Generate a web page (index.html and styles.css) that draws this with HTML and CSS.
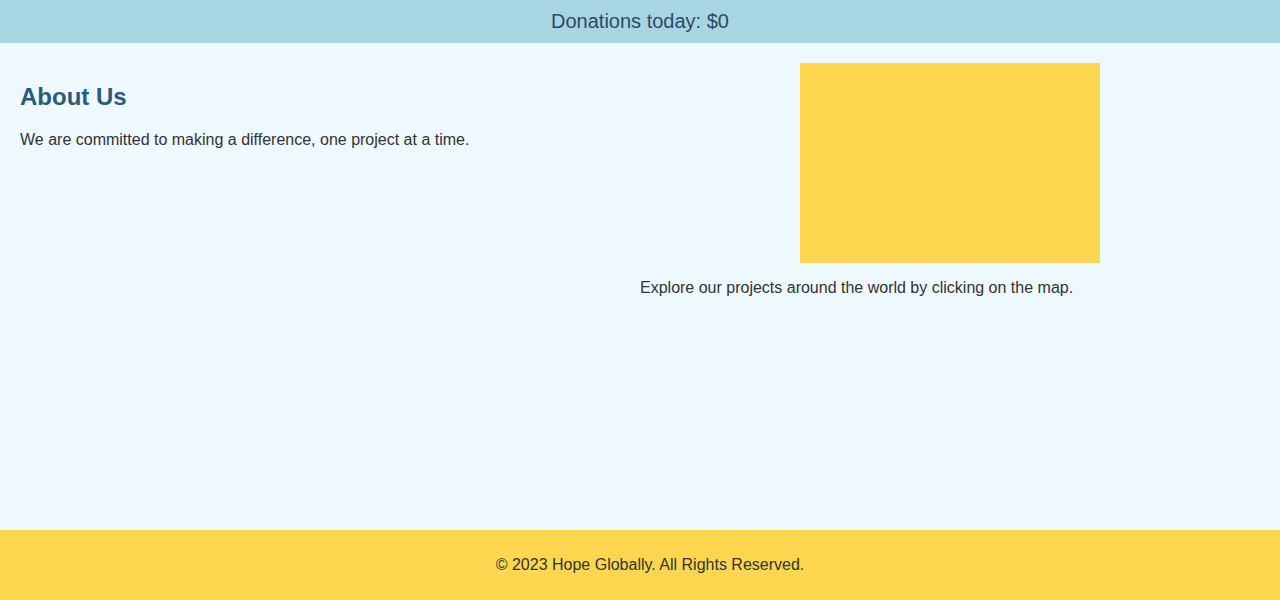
FILE: index.html
```html
<!DOCTYPE html>
<html lang="en">
<head>
<meta charset="utf-8">
<title>Hope Globally</title>
<link rel="stylesheet" href="styles.css">
</head>
<body>
<header class="banner">Donations today: $0</header>
<main class="content">
  <section class="about">
    <h2 class="about-title">About Us</h2>
    <p class="about-text">We are committed to making a difference, one project at a time.</p>
  </section>
  <section class="projects">
    <div class="map"></div>
    <p class="projects-text">Explore our projects around the world by clicking on the map.</p>
  </section>
</main>
<footer class="site-footer">
  <p class="footer-text">© 2023 Hope Globally. All Rights Reserved.</p>
</footer>
</body>
</html>
```
FILE: styles.css
```css
html, body {
  margin: 0;
  padding: 0;
}
body {
  font-family: "Liberation Sans", Arial, sans-serif;
  font-size: 16px;
  color: #333333;
  min-height: 100vh;
  display: flex;
  flex-direction: column;
  background: #edf8ff;
}
.banner {
  background: #a8d5e2;
  color: #2c4a63;
  font-size: 20px;
  text-align: center;
  padding: 10px 0;
  line-height: 23px;
}
.content {
  flex: 1;
  display: flex;
  padding: 20px;
  background: #edf8ff;
}
.about, .projects {
  flex: 1;
}
.about-title {
  margin: 20px 0;
  font-size: 24px;
  color: #2b5a7d;
}
.about-text {
  margin: 16px 0;
}
.projects {
  display: flex;
  flex-direction: column;
  align-items: flex-start;
}
.map {
  width: 300px;
  height: 200px;
  background: #ffd64f;
  align-self: center;
}
.projects-text {
  margin: 16px 0;
}
.site-footer {
  background: #ffd64f;
  padding: 10px 0 10px 20px;
  text-align: center;
}
.footer-text {
  margin: 16px 0;
}
```
